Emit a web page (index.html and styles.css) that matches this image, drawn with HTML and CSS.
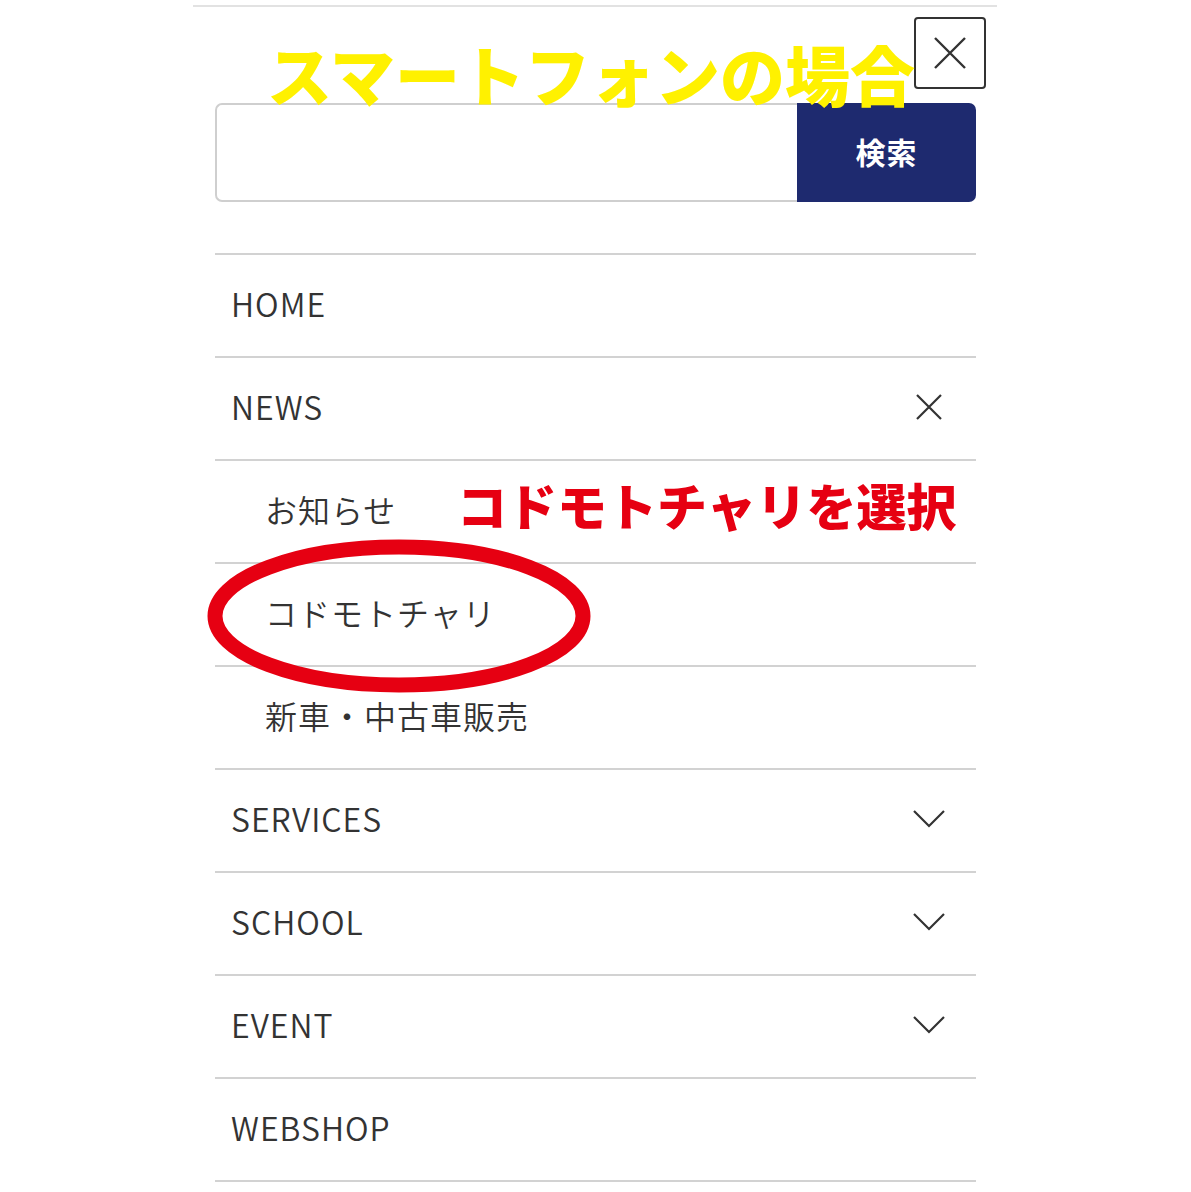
FILE: index.html
```html
<!DOCTYPE html>
<html lang="ja">
<head>
<meta charset="utf-8">
<title>Menu</title>
<link rel="stylesheet" href="styles.css">
</head>
<body>
<div class="page">
  <div class="header">
    <button class="close-btn" aria-label="close">
      <svg width="34" height="34" viewBox="0 0 34 34"><path d="M2 2 L32 32 M32 2 L2 32" stroke="#333" stroke-width="2.4" fill="none"/></svg>
    </button>
  </div>
  <form class="search">
    <div class="search-input"></div>
    <div class="search-btn">検索</div>
  </form>
  <ul class="menu">
    <li class="item"><span>HOME</span></li>
    <li class="item"><span>NEWS</span>
      <svg class="icon" width="32" height="32" viewBox="0 0 32 32"><path d="M4 4 L28 28 M28 4 L4 28" stroke="#333" stroke-width="2.2" fill="none"/></svg>
    </li>
    <li class="item sub"><span>お知らせ</span></li>
    <li class="item sub"><span>コドモトチャリ</span></li>
    <li class="item sub"><span>新車・中古車販売</span></li>
    <li class="item"><span>SERVICES</span>
      <svg class="icon" width="32" height="32" viewBox="0 0 32 32"><path d="M1 8 L16 23 L31 8" stroke="#333" stroke-width="2.2" fill="none"/></svg>
    </li>
    <li class="item"><span>SCHOOL</span>
      <svg class="icon" width="32" height="32" viewBox="0 0 32 32"><path d="M1 8 L16 23 L31 8" stroke="#333" stroke-width="2.2" fill="none"/></svg>
    </li>
    <li class="item"><span>EVENT</span>
      <svg class="icon" width="32" height="32" viewBox="0 0 32 32"><path d="M1 8 L16 23 L31 8" stroke="#333" stroke-width="2.2" fill="none"/></svg>
    </li>
    <li class="item"><span>WEBSHOP</span></li>
  </ul>

  <div class="note-yellow">スマートフォンの場合</div>
  <div class="note-red">コドモトチャリを選択</div>
  <svg class="ring" width="400" height="170" viewBox="0 0 400 170"><ellipse cx="200" cy="85" rx="184" ry="69" stroke="#e60012" stroke-width="15" fill="none"/></svg>
</div>
</body>
</html>
```

FILE: styles.css
```css
* { box-sizing: border-box; }
html, body { margin: 0; padding: 0; background: #fff; }
body {
  font-family: "Noto Sans CJK JP", "Noto Sans", sans-serif;
  color: #333;
}
.page {
  position: relative;
  width: 804px;
  margin: 5px 0 0 193px;
  padding: 0 21px 0 22px;
  border-top: 2px solid #e2e2e2;
}
.header {
  height: 96px;
  display: flex;
  justify-content: flex-end;
  align-items: flex-start;
}
.close-btn {
  width: 72px;
  height: 72px;
  margin: 10px -10px 0 0;
  border: 2px solid #333;
  border-radius: 4px;
  background: #fff;
  padding: 0;
  display: flex;
  align-items: center;
  justify-content: center;
}
.search {
  display: flex;
  height: 99px;
  margin: 0;
}
.search-input {
  flex: 1;
  border: 2px solid #cfcfcf;
  border-right: none;
  border-radius: 7px 0 0 7px;
}
.search-btn {
  width: 179px;
  background: #1e2a6f;
  color: #fff;
  border-radius: 0 7px 7px 0;
  display: flex;
  align-items: center;
  justify-content: center;
  padding-bottom: 3px;
  font-size: 30px;
  font-weight: 700;
  letter-spacing: 1px;
}
.menu {
  list-style: none;
  margin: 51px 0 0;
  padding: 0;
  border-bottom: 2px solid #d2d2d2;
}
.item {
  height: 103px;
  border-top: 2px solid #d2d2d2;
  display: flex;
  align-items: center;
  justify-content: space-between;
  padding: 0 31px 5px 16px;
  font-size: 32px;
  letter-spacing: 1px;
  font-weight: 350;
}
.item.sub { padding-left: 50px; }
.icon { display: block; margin-top: 2px; }
.note-yellow {
  position: absolute;
  left: 74px;
  top: 34px;
  font-size: 65px;
  line-height: 1;
  font-weight: 900;
  color: #fff100;
  white-space: nowrap;
}
.note-red {
  position: absolute;
  left: 264px;
  top: 472px;
  font-size: 50px;
  line-height: 1;
  font-weight: 900;
  color: #e60012;
  white-space: nowrap;
}
.ring {
  position: absolute;
  left: 6px;
  top: 524px;
}
```
